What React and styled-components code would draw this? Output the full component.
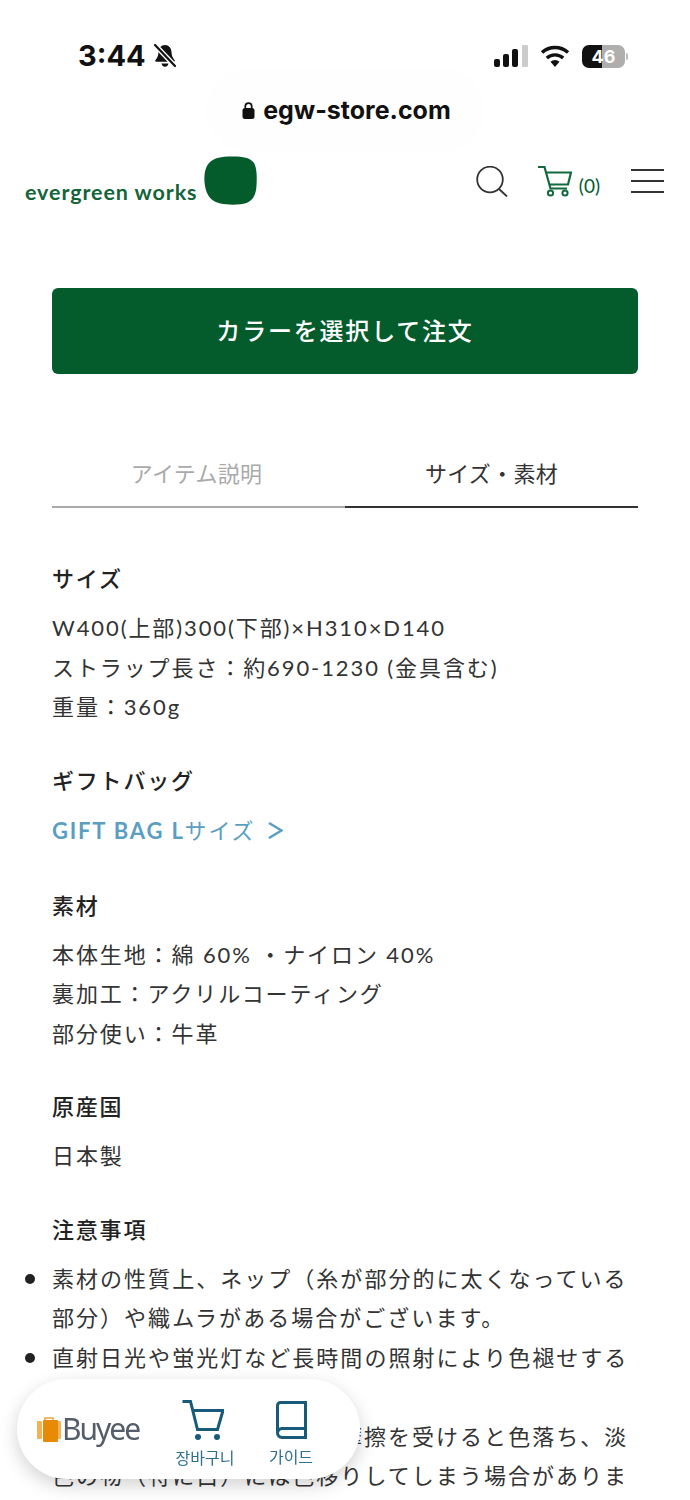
import React from "react";
import styled, { createGlobalStyle } from "styled-components";

const GREEN = "#045c2c";
const BODY_FONT = `Lato, "Noto Sans CJK JP", sans-serif`;

const GlobalStyle = createGlobalStyle`
  html, body { margin: 0; padding: 0; background: #fff; }
  #root { height: 1500px; overflow: hidden; }
  * { box-sizing: border-box; }
`;

const sections = [
  { title: "サイズ", lines: ["W400(上部)300(下部)×H310×D140", "ストラップ長さ：約690-1230 (金具含む)", "重量：360g"] },
  { title: "ギフトバッグ", link: "GIFT BAG L", linkSuffix: "サイズ" },
  { title: "素材", lines: ["本体生地：綿 60% ・ナイロン 40%", "裏加工：アクリルコーティング", "部分使い：牛革"] },
  { title: "原産国", lines: ["日本製"] },
];

const notes = [
  "素材の性質上、ネップ（糸が部分的に太くなっている部分）や織ムラがある場合がございます。",
  "直射日光や蛍光灯など長時間の照射により色褪せする場合があります。",
  "汗や雨などで濡れた状態で摩擦を受けると色落ち、淡色の物（特に白）には色移りしてしまう場合があります。",
];

export default function App() {
  return (
    <Page>
      <GlobalStyle />
      <StatusBar>
        <TimeGroup>
          <Time>3:44</Time>
          <BellOff />
        </TimeGroup>
        <StatusIcons>
          <Signal />
          <Wifi />
          <Battery>
            <BatteryText>46</BatteryText>
          </Battery>
          <BatteryCap />
        </StatusIcons>
      </StatusBar>

      <UrlBar>
        <LockIcon />
        <UrlText>egw-store.com</UrlText>
      </UrlBar>

      <Header>
        <Logo>
          <LogoText>evergreen works</LogoText>
          <LogoBlob />
        </Logo>
        <HeaderActions>
          <SearchIcon />
          <CartLink>
            <HeaderCart />
            <CartCount>(0)</CartCount>
          </CartLink>
          <Burger>
            <BurgerLine />
            <BurgerLine />
            <BurgerLine />
          </Burger>
        </HeaderActions>
      </Header>

      <Content>
        <OrderButton>カラーを選択して注文</OrderButton>

        <Tabs>
          <Tab>アイテム説明</Tab>
          <Tab $active>サイズ・素材</Tab>
        </Tabs>

        {sections.map((section) => (
          <Section key={section.title}>
            <SectionTitle>{section.title}</SectionTitle>
            {section.lines && (
              <div>
                {section.lines.map((line) => (
                  <BodyLine key={line}>{line}</BodyLine>
                ))}
              </div>
            )}
            {section.link && (
              <GiftLink>
                {section.link}
                <GiftSuffix>{section.linkSuffix}</GiftSuffix>
                <GiftArrow />
              </GiftLink>
            )}
          </Section>
        ))}

        <Section>
          <SectionTitle>注意事項</SectionTitle>
          <NoteList>
            {notes.map((note) => (
              <NoteItem key={note}>{note}</NoteItem>
            ))}
          </NoteList>
        </Section>
      </Content>

      <BuyeeWidget>
        <BuyeeLogo>
          <SuitcaseIcon />
          <BuyeeText>Buyee</BuyeeText>
        </BuyeeLogo>
        <WidgetAction>
          <WidgetCart />
          <WidgetLabel>장바구니</WidgetLabel>
        </WidgetAction>
        <WidgetAction>
          <WidgetBook />
          <WidgetLabel>가이드</WidgetLabel>
        </WidgetAction>
      </BuyeeWidget>
    </Page>
  );
}

function BellOff() {
  return (
    <svg width="24" height="26" viewBox="0 0 24 26">
      <path d="M12 2c-4 0-6.200 3-6.500 7-.2 3.500-1 5.500-3 8-.6.8-.2 1.700.8 1.700h17.400c1 0 1.400-.9.800-1.700-2-2.500-2.800-4.500-3-8C18.200 5 16 2 12 2z" fill="#111" />
      <path d="M8.500 20.500h7c-.4 2-1.800 3.300-3.500 3.300s-3.100-1.300-3.500-3.300z" fill="#111" />
      <path d="M1.500 1.500l21 22" stroke="#fff" strokeWidth="5" />
      <path d="M2 2l20 21" stroke="#111" strokeWidth="2.200" strokeLinecap="round" />
    </svg>
  );
}

function Signal() {
  return (
    <svg width="34" height="22" viewBox="0 0 34 22">
      <rect x="0" y="14" width="6" height="8" rx="2" fill="#111" />
      <rect x="9" y="9" width="6" height="13" rx="2" fill="#111" />
      <rect x="18" y="4" width="6" height="18" rx="2" fill="#111" />
      <rect x="28" y="0" width="6" height="22" rx="1" fill="#ccc" />
    </svg>
  );
}

function Wifi() {
  return (
    <svg width="30" height="22" viewBox="0 0 30 22">
      <path d="M15 22l-4.500-5.200a6.800 6.800 0 0 1 9 0z" fill="#111" />
      <path d="M6.800 13a12.400 12.400 0 0 1 16.400 0M2 7.500a19.600 19.600 0 0 1 26 0" fill="none" stroke="#111" strokeWidth="3.400" />
    </svg>
  );
}

function LockIcon() {
  return (
    <svg width="13" height="17" viewBox="0 0 13 17">
      <rect x="0.500" y="6" width="12" height="11" rx="2.500" fill="#111" />
      <path d="M3.300 7V4.300a3.200 3.200 0 0 1 6.400 0V7" fill="none" stroke="#111" strokeWidth="1.700" />
    </svg>
  );
}

function LogoBlob() {
  return (
    <svg width="53" height="49" viewBox="0 0 53 49">
      <path d="M27 0.500C37 0.300 46 1 50 7c3 5 3 14 2.500 23-.5 8-3 14-10 17-6 2-18 2.200-26 .5C7 45.500 2.500 39 1 30-.5 21 .5 12 5 7 10 1.500 18 .7 27 .5z" fill={GREEN} />
    </svg>
  );
}

function SearchIcon() {
  return (
    <svg width="32" height="31" viewBox="0 0 32 31">
      <circle cx="14" cy="13.500" r="12.800" fill="none" stroke="#333" strokeWidth="1.800" />
      <path d="M23 23l8 7.500" stroke="#333" strokeWidth="1.800" />
    </svg>
  );
}

function HeaderCart() {
  return (
    <svg width="35" height="31" viewBox="0 0 35 31">
      <path d="M1 1h6.500l6 21.500h16.500M9 6.500h25L31 18.500H12" fill="none" stroke="#12693c" strokeWidth="2.200" />
      <circle cx="13.500" cy="27" r="2.600" fill="none" stroke="#12693c" strokeWidth="2" />
      <circle cx="28" cy="27" r="2.600" fill="none" stroke="#12693c" strokeWidth="2" />
    </svg>
  );
}

function SuitcaseIcon() {
  return (
    <svg width="24" height="25" viewBox="0 0 24 25">
      <rect x="0" y="4" width="5" height="18" rx="1" fill="#f0b35c" />
      <rect x="19" y="4" width="5" height="18" rx="1" fill="#f0b35c" />
      <path d="M8 3V1h8v2" fill="none" stroke="#eca23c" strokeWidth="1.500" />
      <rect x="6" y="3" width="15" height="22" rx="1" fill="#e78a05" />
    </svg>
  );
}

function WidgetCart() {
  return (
    <WidgetCartSvg width="42" height="40" viewBox="0 0 42 40">
      <path d="M0.500 1.500h8L15.500 29.500h20L41 10.500H10.500" fill="none" stroke="#175a7a" strokeWidth="3" />
      <circle cx="16" cy="37" r="3" fill="#175a7a" />
      <circle cx="35" cy="37" r="3" fill="#175a7a" />
    </WidgetCartSvg>
  );
}

function WidgetBook() {
  return (
    <svg width="31" height="38" viewBox="0 0 31 38">
      <path d="M1.500 31V4.500a3 3 0 0 1 3-3h25v35H6a4.500 4.500 0 0 1-4.500-4.500a4.500 4.500 0 0 1 4.500-4.500h23.500" fill="none" stroke="#175a7a" strokeWidth="3" />
    </svg>
  );
}

function GiftArrow() {
  return (
    <GiftArrowSvg width="15" height="17" viewBox="0 0 15 17">
      <path d="M1 1l12.500 7.500L1 16" fill="none" stroke="#5a9fc2" strokeWidth="2.500" />
    </GiftArrowSvg>
  );
}

const Page = styled.div`
  width: 690px;
  font-family: ${BODY_FONT};
  color: #222;
`;

const StatusBar = styled.div`
  display: flex;
  justify-content: space-between;
  align-items: center;
  height: 32px;
  margin-top: 40px;
  padding: 0 62px 0 78px;
`;

const TimeGroup = styled.div`
  display: flex;
  align-items: center;
  gap: 7px;
`;

const Time = styled.span`
  font-family: Inter, sans-serif;
  font-weight: 700;
  font-size: 29px;
  line-height: 32px;
  color: #111;
`;

const StatusIcons = styled.div`
  display: flex;
  align-items: center;
  gap: 12px;
`;

const Battery = styled.div`
  width: 43px;
  height: 23px;
  border-radius: 7px;
  display: flex;
  align-items: center;
  justify-content: center;
  background: linear-gradient(90deg, #111 46%, #aeaeae 46%);
`;

const BatteryText = styled.span`
  font-family: Inter, sans-serif;
  font-weight: 700;
  font-size: 18px;
  color: #fff;
`;

const BatteryCap = styled.div`
  width: 2px;
  height: 7px;
  margin-left: -11px;
  border-radius: 0 2px 2px 0;
  background: #bbb;
`;

const UrlBar = styled.div`
  display: flex;
  align-items: center;
  justify-content: center;
  gap: 8px;
  width: 268px;
  height: 72px;
  margin: 2px auto 0;
  padding-left: 3px;
  border-radius: 36px;
  background: #fefefe;
  box-shadow: 0 0 14px 6px #fefefe;
`;

const UrlText = styled.span`
  font-family: Inter, sans-serif;
  font-weight: 700;
  font-size: 25px;
  color: #111;
`;

const Header = styled.header`
  display: flex;
  justify-content: space-between;
  align-items: center;
  height: 68px;
  margin-top: 1px;
  padding: 0 26px 0 25px;
`;

const Logo = styled.div`
  display: flex;
  align-items: flex-end;
  gap: 7px;
  margin-bottom: 2px;
`;

const LogoText = styled.span`
  font-family: Lato, sans-serif;
  font-weight: 700;
  font-size: 21.500px;
  line-height: 26px;
  letter-spacing: 0.900px;
  color: #14643a;
`;

const HeaderActions = styled.div`
  display: flex;
  align-items: center;
`;

const CartLink = styled.div`
  display: flex;
  align-items: flex-end;
  gap: 7px;
  margin-left: 29px;
`;

const CartCount = styled.span`
  font-size: 19px;
  line-height: 22px;
  color: ${GREEN};
`;

const Burger = styled.div`
  display: flex;
  flex-direction: column;
  gap: 9px;
  width: 33px;
  margin-left: 31px;
`;

const BurgerLine = styled.span`
  display: block;
  height: 2px;
  background: #333;
`;

const Content = styled.main`
  padding: 0 52px;
  margin-top: 73px;
`;

const OrderButton = styled.button`
  display: block;
  width: 100%;
  height: 86px;
  padding-bottom: 5px;
  border: none;
  border-radius: 6px;
  background: ${GREEN};
  color: #fff;
  font-family: ${BODY_FONT};
  font-size: 24px;
  font-weight: 500;
  letter-spacing: 1.800px;
`;

const Tabs = styled.div`
  display: grid;
  grid-template-columns: 1fr 1fr;
  margin-top: 66px;
  margin-bottom: 51px;
`;

const Tab = styled.div`
  height: 68px;
  display: flex;
  align-items: center;
  justify-content: center;
  padding-bottom: 2px;
  padding-right: ${({ $active }) => ($active ? "0" : "4px")};
  font-size: 22px;
  letter-spacing: 0.300px;
  color: ${({ $active }) => ($active ? "#333" : "#aaa")};
  border-bottom: 2px solid ${({ $active }) => ($active ? "#333" : "#aaa")};
`;

const Section = styled.section`
  margin-bottom: 34px;
`;

const SectionTitle = styled.h3`
  margin: 0 0 9.500px;
  font-size: 22px;
  font-weight: 500;
  line-height: 39.500px;
  letter-spacing: 1.800px;
  color: #222;
`;

const BodyLine = styled.div`
  font-size: 22px;
  line-height: 39.500px;
  letter-spacing: 1.900px;
  color: #333;
`;

const GiftLink = styled.a`
  display: flex;
  align-items: center;
  font-size: 22px;
  font-weight: 700;
  line-height: 42px;
  letter-spacing: 1.800px;
  color: #5a9fc2;
`;

const GiftSuffix = styled.span`
  font-weight: 400;
`;

const GiftArrowSvg = styled.svg`
  margin-left: 13px;
`;

const NoteList = styled.ul`
  margin: 0;
  padding: 0;
  list-style: none;
`;

const NoteItem = styled.li`
  position: relative;
  font-size: 22px;
  line-height: 39.500px;
  letter-spacing: 2.030px;
  color: #333;

  &::before {
    content: "";
    position: absolute;
    left: -27px;
    top: 15px;
    width: 10px;
    height: 10px;
    border-radius: 50%;
    background: #222;
  }
`;

const BuyeeWidget = styled.aside`
  position: fixed;
  left: 17px;
  top: 1379px;
  width: 343px;
  height: 100px;
  display: flex;
  align-items: center;
  padding-left: 20px;
  border-radius: 50px;
  background: #fff;
  box-shadow: 0 6px 18px rgba(0, 0, 0, 0.18);
`;

const BuyeeLogo = styled.div`
  display: flex;
  align-items: center;
  gap: 1px;
  width: 125px;
`;

const BuyeeText = styled.span`
  font-family: "Noto Sans", sans-serif;
  font-size: 30px;
  line-height: 34px;
  letter-spacing: -2px;
  color: #555e68;
`;

const WidgetAction = styled.div`
  display: flex;
  flex-direction: column;
  align-items: center;
  gap: 8px;
  width: 86px;
  margin-top: 8px;
`;

const WidgetCartSvg = styled.svg`
  margin-right: 5px;
`;

const WidgetLabel = styled.span`
  font-family: "Noto Sans CJK KR", sans-serif;
  font-size: 16px;
  line-height: 18px;
  color: #2d6f8f;
`;
